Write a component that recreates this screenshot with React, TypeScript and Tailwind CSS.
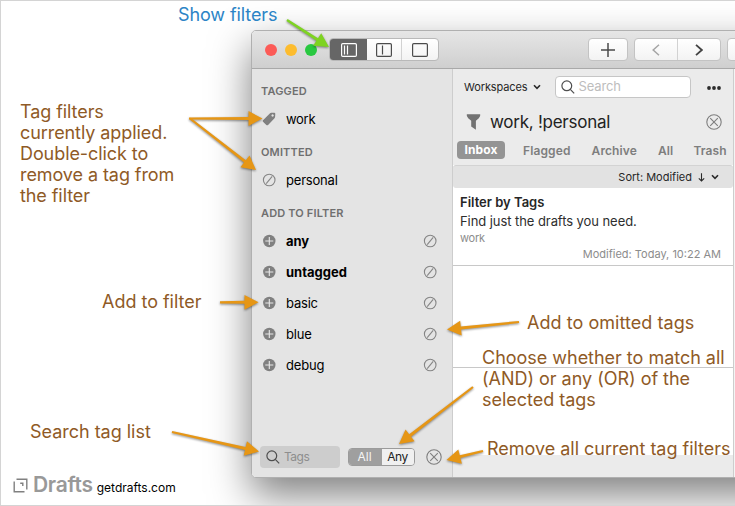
import React from "react";

function Omit() {
  return (
    <svg width="14" height="14" viewBox="0 0 14 14" fill="none" stroke="#858585" strokeWidth="1.1">
      <circle cx="7.2" cy="7" r="5.8" />
      <path d="M4.2 10.6 L10.2 3.4" />
    </svg>
  );
}

function Plus() {
  return (
    <svg width="14" height="14" viewBox="0 0 14 14">
      <circle cx="7.3" cy="7" r="6.2" fill="#808080" />
      <path d="M7.3 3v8M3.3 7h8" stroke="#e8e8e8" strokeWidth="1.1" />
    </svg>
  );
}

function CircleX() {
  return (
    <svg width="16" height="16" viewBox="0 0 16 16" fill="none" stroke="#7e7e7e" strokeWidth="1.1">
      <circle cx="8" cy="8" r="7.2" />
      <path d="M4.2 4.2l7.6 7.6M11.8 4.2l-7.6 7.6" />
    </svg>
  );
}

function Magnifier() {
  return (
    <svg width="14" height="14" viewBox="0 0 14 14" fill="none" stroke="#4e4e4e" strokeWidth="1.2">
      <circle cx="5.8" cy="5.8" r="4.9" />
      <path d="M9.3 9.4 L13.2 13.4" />
    </svg>
  );
}

function Chevron() {
  return (
    <svg width="8" height="6" viewBox="0 0 8 6" fill="none" stroke="#2a2a2a" strokeWidth="1.6">
      <path d="M1 1.2 L4 4.3 L7 1.2" />
    </svg>
  );
}

function PaneIcon({ lines, color }: { lines: number[]; color: string }) {
  return (
    <svg width="16" height="14" viewBox="0 0 16 14" fill="none" stroke={color} strokeWidth="1.2">
      <rect x="0.6" y="0.6" width="14.8" height="12.8" rx="1.2" />
      {lines.map((x) => (
        <path key={x} d={`M${x} 2.4V11.6`} />
      ))}
    </svg>
  );
}

type ArrowProps = { x1: number; y1: number; x2: number; y2: number; color?: string };

function Arrow({ x1, y1, x2, y2, color = "#e69615" }: ArrowProps) {
  const length = Math.hypot(x2 - x1, y2 - y1);
  const angle = (Math.atan2(y2 - y1, x2 - x1) * 180) / Math.PI;
  const neck = length - 14;
  return (
    <path
      fill={color}
      transform={`translate(${x1} ${y1}) rotate(${angle})`}
      d={`M0 -1.1 L${neck} -1.5 L${neck} -7.4 L${length} 0 L${neck} 7.4 L${neck} 1.5 L0 1.1 Z`}
    />
  );
}

const filters = [
  { name: "any", style: "font-bold tracking-[-0.1px]" },
  { name: "untagged", style: "font-bold" },
  { name: "basic", style: "tracking-[-0.2px]" },
  { name: "blue", style: "tracking-[-0.2px]" },
  { name: "debug", style: "tracking-[-0.2px]" },
];

function Heading({ children }: { children: React.ReactNode }) {
  return <h2 className="text-[11px] font-semibold leading-[14px] tracking-[0.15px] text-[#6f6f6f]">{children}</h2>;
}

function Sidebar() {
  return (
    <aside className="flex w-[201px] shrink-0 flex-col border-r border-[#cdcdcd] bg-[#e4e4e4] pt-[15px] text-[13px] text-black">
      <div className="pl-[9px]"><Heading>TAGGED</Heading></div>
      <div className="mt-[6px] flex h-[31px] items-center pl-[10px] tracking-[-0.3px]">
        <svg width="14" height="14" viewBox="0 0 14 14" className="mr-[10px] -translate-y-px">
          <path fill="#808080" fillRule="evenodd" d="M7.8 1.5Q8.4 .8 9.3 .8L12.2 .7Q13.3 .7 13.3 1.8L13.1 4.8Q13.1 5.6 12.5 6.2L6.1 12.9Q5.2 13.7 4.3 12.9L1 9.8Q.3 9 1 8.2ZM10.6 2.3a1.2 1.2 0 1 0 .01 0Z" />
        </svg>
        work
      </div>
      <div className="mt-[10px] pl-[9px]"><Heading>OMITTED</Heading></div>
      <div className="mt-[6px] flex h-[31px] items-center pl-[10px] tracking-[-0.2px]">
        <span className="mr-[10px] -translate-y-px"><Omit /></span>
        personal
      </div>
      <div className="mt-[10px] pl-[9px]"><Heading>ADD TO FILTER</Heading></div>
      <div className="mt-[6px]">
        {filters.map((filter) => (
          <div key={filter.name} className="flex h-[31px] items-center pl-[10px] pr-[15px]">
            <span className="mr-[10px] -translate-y-px"><Plus /></span>
            <span className={filter.style}>{filter.name}</span>
            <span className="ml-auto -translate-y-px"><Omit /></span>
          </div>
        ))}
      </div>
      <div className="mb-[9px] mt-auto flex items-center pl-2">
        <div className="flex h-[22px] w-20 items-center rounded-[4px] bg-[#cdcdcd] pl-[6px] text-xs tracking-[-0.5px] text-[#8e8e8e]">
          <Magnifier />
          <span className="ml-[4px]">Tags</span>
        </div>
        <div className="ml-2 flex h-[18px] w-[67px] overflow-hidden rounded-[4px] border border-[#9b9b9b] text-xs leading-4">
          <span className="flex w-[33px] justify-center bg-[#9f9f9f] pr-[2px] text-[#f5f5f5]">All</span>
          <span className="flex flex-1 justify-center bg-[#f0f0f0] pr-px tracking-[-0.4px] text-[#222]">Any</span>
        </div>
        <span className="ml-[11px]"><CircleX /></span>
      </div>
    </aside>
  );
}

function DraftList() {
  return (
    <section className="flex w-[281px] shrink-0 flex-col border-r border-[#cdcdcd] bg-white">
      <header className="h-[96px] bg-[#ebebeb]">
        <div className="flex h-[36px] items-center pl-[11px]">
          <span className="text-[11px] tracking-[-0.1px] text-[#262626]">Workspaces</span>
          <span className="ml-[5px]"><Chevron /></span>
          <div className="ml-[14px] flex h-[22px] w-[136px] items-center rounded-[4px] border border-[#c6c6c6] bg-white pl-[5px] text-[13px] tracking-[-0.15px] text-[#bdbdbd]">
            <Magnifier />
            <span className="ml-[4px]">Search</span>
          </div>
          <svg width="14" height="4" viewBox="0 0 14 4" className="ml-[16px] translate-y-px" fill="#2b2b2b">
            <circle cx="2" cy="2" r="1.9" /><circle cx="7" cy="2" r="1.9" /><circle cx="12" cy="2" r="1.9" />
          </svg>
        </div>
        <div className="flex h-[34px] items-center pl-[13px]">
          <svg width="15" height="16" viewBox="0 0 15 16" fill="#727272">
            <path d="M.8.2H14.2Q14.8 2.4 12.8 4.2L9.9 6.8V15.8L5.2 12.4V6.8L2.2 4.2Q.2 2.4.8.2Z" />
          </svg>
          <span className="ml-[9px] translate-y-px text-[17px] tracking-[-0.26px] text-[#222]">work, !personal</span>
          <span className="ml-auto mr-[11px]"><CircleX /></span>
        </div>
        <nav className="mt-[2px] flex h-[18px] items-center pl-1 text-xs font-semibold tracking-[0.12px] text-[#7e7e7e]">
          <span className="flex h-[18px] w-12 items-center justify-center rounded-[4px] bg-[#949494] font-bold text-white">Inbox</span>
          <span className="ml-[18px] translate-y-px">Flagged</span>
          <span className="ml-[21px] translate-y-px">Archive</span>
          <span className="ml-[21px] translate-y-px">All</span>
          <span className="ml-[20px] translate-y-px">Trash</span>
        </nav>
      </header>
      <div className="flex h-[23px] items-center justify-end rounded-[3px] border-t border-[#d3d3d3] bg-[#e2e2e2] pr-[14px] text-[11px] text-[#262626]">
        Sort: Modified
        <svg width="7" height="9" viewBox="0 0 7 9" fill="none" stroke="#2a2a2a" strokeWidth="1.1" className="ml-[6px]">
          <path d="M3.5 .3V8M.8 5.3L3.5 8L6.2 5.3" />
        </svg>
        <span className="ml-[6px]"><Chevron /></span>
      </div>
      <article className="flex h-[78px] shrink-0 flex-col border-b border-[#c8c8c8] pl-[7px] pr-[12px] pt-[5px]">
        <h3 className="text-[13px] font-semibold leading-[18px] text-[#262626]">Filter by Tags</h3>
        <p className="mt-px text-[13px] leading-[18px] tracking-[-0.07px] text-[#2e2e2e]">Find just the drafts you need.</p>
        <p className="mt-px text-[11px] leading-[14px] tracking-[-0.2px] text-[#8c8c8c]">work</p>
        <p className="mt-[2px] text-right text-[11px] leading-[14px] text-[#8c8c8c]">Modified: Today, 10:22 AM</p>
      </article>
      <div className="h-[102px] shrink-0 border-b border-[#c8c8c8]" />
      <footer className="mt-auto h-[22px] bg-[#ebebeb]" />
    </section>
  );
}

const button = "flex h-[23px] items-center justify-center rounded-[4px] border border-[#c3c3c3] bg-gradient-to-b from-white to-[#f3f3f3]";

function TitleBar() {
  return (
    <div className="flex h-[38px] shrink-0 items-center border-b border-[#a9a9a9] bg-gradient-to-b from-[#e6e6e6] to-[#cfcfcf] pl-[13px]">
      <div className="flex gap-2">
        <i className="size-3 rounded-full bg-[#fc5b57]" />
        <i className="size-3 rounded-full bg-[#fdbc2e]" />
        <i className="size-3 rounded-full bg-[#28c840]" />
      </div>
      <div className="ml-[12px] flex h-[23px] w-[110px] overflow-hidden rounded-[4px] border border-[#b9b9b9] bg-gradient-to-b from-white to-[#f3f3f3]">
        <span className="flex w-[37px] items-center justify-center bg-[#666]"><PaneIcon lines={[3.5, 6.5]} color="#fff" /></span>
        <span className="flex w-[35px] items-center justify-center border-r border-[#d2d2d2] pr-px"><PaneIcon lines={[6.5]} color="#4c4c4c" /></span>
        <span className="flex flex-1 items-center justify-center pr-px"><PaneIcon lines={[]} color="#4c4c4c" /></span>
      </div>
      <div className={`${button} ml-[149px] w-[40px]`}>
        <svg width="14" height="14" viewBox="0 0 14 14" stroke="#4a4a4a" strokeWidth="1.5"><path d="M7 0v14M0 7h14" /></svg>
      </div>
      <div className={`${button} ml-[6px] w-[87px]`}>
        <span className="flex h-full flex-1 items-center justify-center border-r border-[#d2d2d2]">
          <svg width="8" height="12" viewBox="0 0 8 12" fill="none" stroke="#a5a5a5" strokeWidth="1.5"><path d="M7 .8L1.2 6L7 11.2" /></svg>
        </span>
        <span className="flex h-full flex-1 items-center justify-center">
          <svg width="8" height="12" viewBox="0 0 8 12" fill="none" stroke="#444" strokeWidth="1.8"><path d="M1 .8L6.8 6L1 11.2" /></svg>
        </span>
      </div>
      <div className={`${button} ml-[6px] w-[40px]`} />
    </div>
  );
}

export default function App() {
  return (
    <div className="relative h-[506px] w-[735px] overflow-hidden bg-white font-['Inter',sans-serif]">
      <main className="flex h-full w-full overflow-hidden border-b border-l border-t border-[#d4d4d4] pl-[250px] pt-[29px]">
        <div className="flex h-[448px] w-[620px] shrink-0 flex-col overflow-hidden rounded-[5px] border border-[#b0b0b0] bg-white shadow-[0_17px_40px_0_rgba(0,0,0,0.5)]">
          <TitleBar />
          <div className="flex min-h-0 flex-1">
            <Sidebar />
            <DraftList />
            <div className="flex-1 bg-[#f4f4f4]" />
          </div>
        </div>
      </main>

      <div className="absolute left-[13px] top-[473px] flex items-baseline">
        <svg width="15" height="15" viewBox="0 0 15 15" fill="none" stroke="#808080" strokeWidth="1.4" className="translate-y-px">
          <path d="M3.5 1.2H13.8V11.5M1.2 3.5V13.8H11.5M7.2 5.3H9.8V8" />
        </svg>
        <span className="ml-[5px] text-[21px] font-semibold leading-6 tracking-[-0.3px] text-[#999]">Drafts</span>
        <span className="ml-[4px] text-xs text-black">getdrafts.com</span>
      </div>

      <svg className="pointer-events-none absolute inset-0 drop-shadow-[0_1px_1px_rgba(0,0,0,0.45)]" width="735" height="506">
        <Arrow x1={287} y1={20} x2={329} y2={47} color="#7ed321" />
        <Arrow x1={189} y1={118.5} x2={262.5} y2={118.5} />
        <Arrow x1={190} y1={118.5} x2={256} y2={170} />
        <Arrow x1={220} y1={302.3} x2={258.5} y2={302.3} />
        <Arrow x1={172} y1={432} x2={259} y2={451.5} />
        <Arrow x1={519} y1={322} x2={447} y2={329.5} />
        <Arrow x1={473} y1={387} x2={399} y2={444} />
        <Arrow x1={483} y1={451} x2={446.5} y2={460} />
      </svg>

      <div className="text-[18px] leading-[21px] tracking-[-0.02px] text-[#8f5a26]">
        <p className="absolute left-[178px] top-[4px] tracking-[-0.1px] whitespace-nowrap text-[#2b84c6]">Show filters</p>
        <p className="absolute left-[20px] top-[101px] whitespace-nowrap tracking-[-0.08px]">
          Tag filters<br />currently applied.<br />Double-click to<br />remove a tag from<br />the filter
        </p>
        <p className="absolute left-[102px] top-[291px] whitespace-nowrap">Add to filter</p>
        <p className="absolute left-[30px] top-[421px] whitespace-nowrap">Search tag list</p>
        <p className="absolute left-[527px] top-[312px] whitespace-nowrap tracking-[0.05px]">Add to omitted tags</p>
        <p className="absolute left-[482px] top-[347px] whitespace-nowrap">
          Choose whether to match all<br />(AND) or any (OR) of the<br />selected tags
        </p>
        <p className="absolute left-[487px] top-[438px] whitespace-nowrap">Remove all current tag filters</p>
      </div>
    </div>
  );
}
